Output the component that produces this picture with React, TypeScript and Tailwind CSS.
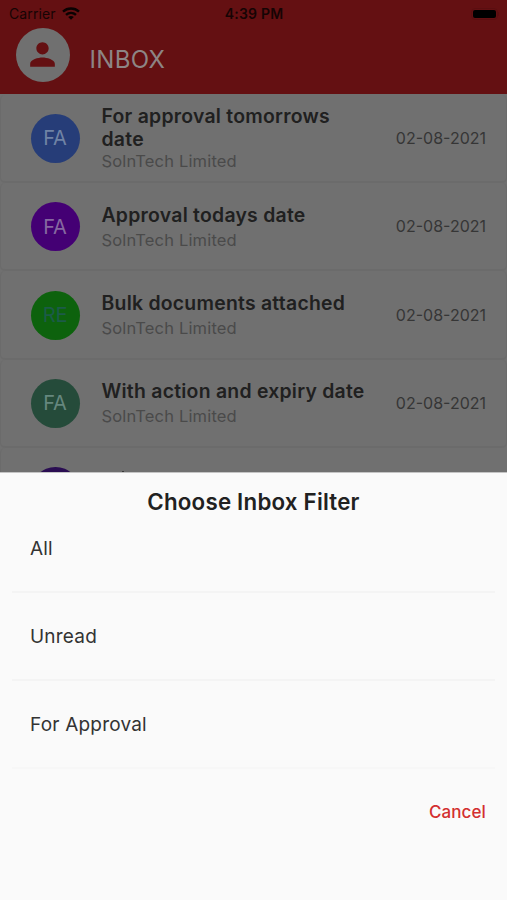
import clsx from "clsx";
import { MdPerson } from "react-icons/md";

interface InboxItem {
  id: number;
  initials: string;
  avatar: string;
  title: string;
  company: string;
  date: string;
}

const items: InboxItem[] = [
  {
    id: 1,
    initials: "FA",
    avatar: "bg-[#263d78] text-[#7083a5]",
    title: "For approval tomorrows date",
    company: "SolnTech Limited",
    date: "02-08-2021",
  },
  {
    id: 2,
    initials: "FA",
    avatar: "bg-[#440074] text-[#8668a0]",
    title: "Approval todays date",
    company: "SolnTech Limited",
    date: "02-08-2021",
  },
  {
    id: 3,
    initials: "RE",
    avatar: "bg-[#0d620d] text-[#1c5b48]",
    title: "Bulk documents attached",
    company: "SolnTech Limited",
    date: "02-08-2021",
  },
  {
    id: 4,
    initials: "FA",
    avatar: "bg-[#254b3a] text-[#66877e]",
    title: "With action and expiry date",
    company: "SolnTech Limited",
    date: "02-08-2021",
  },
];

const filters = ["All", "Unread", "For Approval"];

const StatusBar = () => (
  <div className="grid h-[27px] grid-cols-3 items-center pl-[9px] pr-[8px] text-[#160404]">
    <div className="flex items-center gap-[6px] text-[14px] tracking-[0.1px]">
      Carrier
      <svg width="18" height="13" viewBox="0 0 18 13" fill="none" stroke="#0a0202" strokeWidth="2.4">
        <path d="M1 4.6C5.6.4 12.4.4 17 4.6" />
        <path d="M4 7.9c2.9-2.6 7.1-2.6 10 0" />
        <path d="M9 12.8 6.2 10c1.6-1.4 4-1.4 5.6 0z" fill="#0a0202" stroke="none" />
      </svg>
    </div>
    <div className="text-center text-[14px] font-semibold tracking-[0.2px]">4:39 PM</div>
    <div className="flex items-center justify-end">
      <div className="h-[12px] w-[27px] rounded-[4px] border border-[#5b0e10] p-px">
        <div className="h-full rounded-[2px] bg-black" />
      </div>
      <div className="h-1 w-px bg-[#5b0e10]" />
    </div>
  </div>
);

const InboxRow = ({ item }: { item: InboxItem }) => (
  <li className="flex h-[88.4px] shrink-0 items-center rounded-[5px] border-x border-b-2 border-[#6b6b6b] pl-[29.5px] pr-5 pt-px">
    <div
      className={clsx(
        "flex size-[49px] shrink-0 items-center justify-center rounded-full text-[20px] tracking-[-0.2px]",
        item.avatar
      )}
    >
      {item.initials}
    </div>
    <div className="ml-[22px] w-[270px]">
      <h2 className="text-[19.4px] font-semibold leading-[23px] tracking-[0.25px] text-[#202020]">
        {item.title}
      </h2>
      <p
        className={clsx(
          "text-[16.5px] leading-5 tracking-[0.17px] text-[#4a4a4a]",
          item.id !== 1 && "mt-[3px]"
        )}
      >
        {item.company}
      </p>
    </div>
    <span className="-mt-px ml-auto text-[16px] text-[#363636]">{item.date}</span>
  </li>
);

// top edge of the next row, the rest is under the sheet
const NextRow = () => (
  <li className="flex min-h-0 flex-1 items-start overflow-hidden rounded-tl-[5px] border-l border-[#6b6b6b] pl-[29.5px] pt-[19px]">
    <div className="size-[49px] shrink-0 rounded-full bg-[#2a0d52]" />
    <div className="ml-[42px] mt-[4px] h-3 w-[2px] bg-[#383838]" />
  </li>
);

const FilterSheet = () => (
  <section className="h-[428px] shrink-0 border-t border-[#c4c4c4] bg-[#fafafa]">
    <h2 className="pt-[14px] text-center text-[22.3px] font-semibold leading-[30px] tracking-[0.22px] text-[#212121]">
      Choose Inbox Filter
    </h2>
    <ul className="-mt-[12px] px-[12px]">
      {filters.map((filter) => (
        <li
          key={filter}
          className="flex h-[88px] items-center border-b-2 border-[#f4f4f4] pl-[18px] pt-[2px] text-[19px] tracking-[0.2px] text-[#333333] last:border-[#f7f7f7]"
        >
          {filter}
        </li>
      ))}
    </ul>
    <div className="flex h-[88px] items-center justify-end pr-[21px]">
      <button className="text-[17px] font-medium tracking-[0.1px] text-[#d32f2f]">Cancel</button>
    </div>
  </section>
);

export default function App() {
  return (
    <div className="flex h-[900px] w-[507px] flex-col overflow-hidden bg-[#707070] font-['Inter','Liberation_Sans',sans-serif]">
      <header className="h-[94px] shrink-0 bg-[#641012]">
        <StatusBar />
        <div className="flex items-center pl-[15.5px] pt-[0.5px]">
          <div className="flex size-[54px] items-center justify-center rounded-full bg-[#707070] text-[#641012]">
            <MdPerson size={37} />
          </div>
          <h1 className="ml-5 mt-[11px] text-[24px] tracking-[0.3px] text-[#8d8585]">INBOX</h1>
        </div>
      </header>
      <ul className="flex h-[378px] shrink-0 flex-col overflow-hidden pt-[0.6px]">
        {items.map((item) => (
          <InboxRow key={item.id} item={item} />
        ))}
        <NextRow />
      </ul>
      <FilterSheet />
    </div>
  );
}
